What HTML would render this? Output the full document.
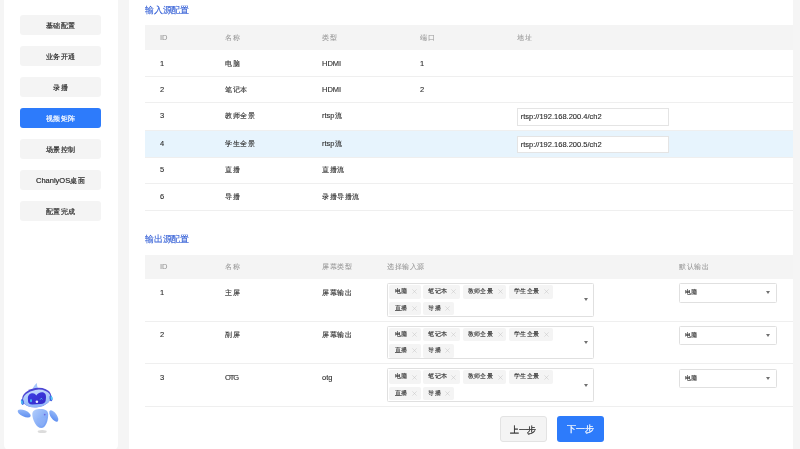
<!DOCTYPE html>
<html><head><meta charset="utf-8">
<style>
*{margin:0;padding:0;box-sizing:border-box}
html,body{width:800px;height:449px;overflow:hidden;background:#f5f5f5;font-family:"Liberation Sans",sans-serif;color:#333}
#wrap{position:absolute;left:0;top:0;width:800px;height:449px;will-change:transform}
.a{position:absolute;white-space:nowrap}
.c{font-size:7.05px;letter-spacing:0.55px}
.side{left:4.3px;top:-10px;width:113.7px;height:460px;background:#fff;border-radius:5px}
.nav{left:20.3px;width:80.7px;height:20px;background:#f4f4f4;border-radius:3px;font-size:7.5px;line-height:21px;text-align:center;color:#2a2a2a;-webkit-text-stroke:0.18px currentColor}
.nav.on{background:#2d7bfb;color:#fff}
.main{left:128.8px;top:-10px;width:664.2px;height:480px;background:#fff}
.ttl{left:145px;font-size:9px;letter-spacing:-0.25px;line-height:10px;color:#2d5ad5;-webkit-text-stroke:0.1px currentColor}
.thd{left:145px;width:648px;background:#f4f4f4}
.th{font-size:7.5px;line-height:10px;color:#969696;-webkit-text-stroke:0.05px currentColor}
.td{font-size:7.5px;line-height:10px;color:#2e2e2e;-webkit-text-stroke:0.12px currentColor}
.ln{left:145px;width:648px;height:1px;background:#efefef}
.inp{left:517px;width:152px;height:17.5px;border:1px solid #e4e4e4;background:#fff;font-size:7.5px;line-height:15.5px;padding-left:2.7px;color:#2a2a2a;-webkit-text-stroke:0.12px currentColor}
.sel{left:387.25px;width:206.3px;height:33.5px;border:1px solid #e0e0e0;border-radius:1.5px;background:#fff}
.tag{height:13.5px;background:#f4f4f4;border-radius:2px;font-size:6.3px;letter-spacing:0.3px;line-height:12.4px;color:#2e2e2e;padding-left:5.3px;-webkit-text-stroke:0.12px currentColor}
.x{position:absolute;right:3.6px;top:4.3px}
.arr{width:0;height:0;border-left:2.7px solid transparent;border-right:2.7px solid transparent;border-top:3.2px solid #707070}
.dsel{left:679.2px;width:97.5px;height:19.7px;border:1px solid #e0e0e0;border-radius:1.5px;background:#fff;font-size:6.3px;letter-spacing:0.3px;line-height:15.5px;padding-left:4.5px;color:#2e2e2e;-webkit-text-stroke:0.12px currentColor}
.btn{top:416px;width:47px;height:25.6px;border-radius:3px;font-size:9px;letter-spacing:-0.3px;line-height:26.6px;text-align:center;-webkit-text-stroke:0.22px currentColor}
</style></head><body>
<div id="wrap">
<div class="a side"></div>
<div class="a nav" style="top:15px"><span class="c">基础配置</span></div>
<div class="a nav" style="top:46px"><span class="c">业务开通</span></div>
<div class="a nav" style="top:77px"><span class="c">录播</span></div>
<div class="a nav on" style="top:108px"><span class="c">视频矩阵</span></div>
<div class="a nav" style="top:139px"><span class="c">场景控制</span></div>
<div class="a nav" style="top:170px">ChanlyOS<span class="c">桌面</span></div>
<div class="a nav" style="top:201px"><span class="c">配置完成</span></div>
<div class="a main"></div>
<div class="a ttl" style="top:5.2px">输入源配置</div>
<div class="a thd" style="top:25px;height:25px"></div>
<div class="a th" style="left:160px;top:32.5px">ID</div>
<div class="a th" style="left:225px;top:32.5px"><span class="c">名称</span></div>
<div class="a th" style="left:322px;top:32.5px"><span class="c">类型</span></div>
<div class="a th" style="left:420px;top:32.5px"><span class="c">端口</span></div>
<div class="a th" style="left:517px;top:32.5px"><span class="c">地址</span></div>
<div class="a" style="left:145px;top:130px;width:648px;height:27.5px;background:#e7f4fd"></div>
<div class="a ln" style="top:76px"></div>
<div class="a ln" style="top:102px"></div>
<div class="a ln" style="top:129.5px"></div>
<div class="a ln" style="top:157px"></div>
<div class="a ln" style="top:183px"></div>
<div class="a ln" style="top:209.5px"></div>
<div class="a td" style="left:160px;top:58.5px">1</div>
<div class="a td" style="left:225px;top:58.5px"><span class="c">电脑</span></div>
<div class="a td" style="left:322px;top:58.5px">HDMI</div>
<div class="a td" style="left:420px;top:58.5px">1</div>
<div class="a td" style="left:160px;top:84.5px">2</div>
<div class="a td" style="left:225px;top:84.5px"><span class="c">笔记本</span></div>
<div class="a td" style="left:322px;top:84.5px">HDMI</div>
<div class="a td" style="left:420px;top:84.5px">2</div>
<div class="a td" style="left:160px;top:111px">3</div>
<div class="a td" style="left:225px;top:111px"><span class="c">教师全景</span></div>
<div class="a td" style="left:322px;top:111px">rtsp<span class="c">流</span></div>
<div class="a inp" style="top:108px">rtsp://192.168.200.4/ch2</div>
<div class="a td" style="left:160px;top:138.5px">4</div>
<div class="a td" style="left:225px;top:138.5px"><span class="c">学生全景</span></div>
<div class="a td" style="left:322px;top:138.5px">rtsp<span class="c">流</span></div>
<div class="a inp" style="top:135.5px">rtsp://192.168.200.5/ch2</div>
<div class="a td" style="left:160px;top:165px">5</div>
<div class="a td" style="left:225px;top:165px"><span class="c">直播</span></div>
<div class="a td" style="left:322px;top:165px"><span class="c">直播流</span></div>
<div class="a td" style="left:160px;top:191.5px">6</div>
<div class="a td" style="left:225px;top:191.5px"><span class="c">导播</span></div>
<div class="a td" style="left:322px;top:191.5px"><span class="c">录播导播流</span></div>
<div class="a ttl" style="top:234.3px">输出源配置</div>
<div class="a thd" style="top:254.5px;height:24px"></div>
<div class="a th" style="left:160px;top:261.5px">ID</div>
<div class="a th" style="left:225px;top:261.5px"><span class="c">名称</span></div>
<div class="a th" style="left:322px;top:261.5px"><span class="c">屏幕类型</span></div>
<div class="a th" style="left:387px;top:261.5px"><span class="c">选择输入源</span></div>
<div class="a th" style="left:679px;top:261.5px"><span class="c">默认输出</span></div>
<div class="a ln" style="top:320.5px"></div>
<div class="a ln" style="top:363.2px"></div>
<div class="a ln" style="top:405.7px"></div>
<div class="a td" style="left:160px;top:287.5px">1</div>
<div class="a td" style="left:225px;top:287.5px"><span class="c">主屏</span></div>
<div class="a td" style="left:322px;top:287.5px"><span class="c">屏幕输出</span></div>
<div class="a sel" style="top:283.25px">
<div class="a tag" style="left:1.15px;top:0.85px;width:31.35px">电脑<svg class="x" width="5" height="5" viewBox="0 0 5 5"><path d="M0.4 0.4L4.6 4.6M4.6 0.4L0.4 4.6" stroke="#c4c4c4" stroke-width="0.5"/></svg></div>
<div class="a tag" style="left:34.85px;top:0.85px;width:36.9px">笔记本<svg class="x" width="5" height="5" viewBox="0 0 5 5"><path d="M0.4 0.4L4.6 4.6M4.6 0.4L0.4 4.6" stroke="#c4c4c4" stroke-width="0.5"/></svg></div>
<div class="a tag" style="left:74.35px;top:0.85px;width:43.8px">教师全景<svg class="x" width="5" height="5" viewBox="0 0 5 5"><path d="M0.4 0.4L4.6 4.6M4.6 0.4L0.4 4.6" stroke="#c4c4c4" stroke-width="0.5"/></svg></div>
<div class="a tag" style="left:120.4px;top:0.85px;width:44.1px">学生全景<svg class="x" width="5" height="5" viewBox="0 0 5 5"><path d="M0.4 0.4L4.6 4.6M4.6 0.4L0.4 4.6" stroke="#c4c4c4" stroke-width="0.5"/></svg></div>
<div class="a tag" style="left:1.15px;top:17.25px;width:31.35px">直播<svg class="x" width="5" height="5" viewBox="0 0 5 5"><path d="M0.4 0.4L4.6 4.6M4.6 0.4L0.4 4.6" stroke="#c4c4c4" stroke-width="0.5"/></svg></div>
<div class="a tag" style="left:34.85px;top:17.25px;width:30.65px">导播<svg class="x" width="5" height="5" viewBox="0 0 5 5"><path d="M0.4 0.4L4.6 4.6M4.6 0.4L0.4 4.6" stroke="#c4c4c4" stroke-width="0.5"/></svg></div>
<div class="a arr" style="left:195.3px;top:14.2px"></div></div>
<div class="a dsel" style="top:283.3px">电脑<div class="a arr" style="left:86.3px;top:7.2px"></div></div>
<div class="a td" style="left:160px;top:330.0px">2</div>
<div class="a td" style="left:225px;top:330.0px"><span class="c">副屏</span></div>
<div class="a td" style="left:322px;top:330.0px"><span class="c">屏幕输出</span></div>
<div class="a sel" style="top:325.75px">
<div class="a tag" style="left:1.15px;top:0.85px;width:31.35px">电脑<svg class="x" width="5" height="5" viewBox="0 0 5 5"><path d="M0.4 0.4L4.6 4.6M4.6 0.4L0.4 4.6" stroke="#c4c4c4" stroke-width="0.5"/></svg></div>
<div class="a tag" style="left:34.85px;top:0.85px;width:36.9px">笔记本<svg class="x" width="5" height="5" viewBox="0 0 5 5"><path d="M0.4 0.4L4.6 4.6M4.6 0.4L0.4 4.6" stroke="#c4c4c4" stroke-width="0.5"/></svg></div>
<div class="a tag" style="left:74.35px;top:0.85px;width:43.8px">教师全景<svg class="x" width="5" height="5" viewBox="0 0 5 5"><path d="M0.4 0.4L4.6 4.6M4.6 0.4L0.4 4.6" stroke="#c4c4c4" stroke-width="0.5"/></svg></div>
<div class="a tag" style="left:120.4px;top:0.85px;width:44.1px">学生全景<svg class="x" width="5" height="5" viewBox="0 0 5 5"><path d="M0.4 0.4L4.6 4.6M4.6 0.4L0.4 4.6" stroke="#c4c4c4" stroke-width="0.5"/></svg></div>
<div class="a tag" style="left:1.15px;top:17.25px;width:31.35px">直播<svg class="x" width="5" height="5" viewBox="0 0 5 5"><path d="M0.4 0.4L4.6 4.6M4.6 0.4L0.4 4.6" stroke="#c4c4c4" stroke-width="0.5"/></svg></div>
<div class="a tag" style="left:34.85px;top:17.25px;width:30.65px">导播<svg class="x" width="5" height="5" viewBox="0 0 5 5"><path d="M0.4 0.4L4.6 4.6M4.6 0.4L0.4 4.6" stroke="#c4c4c4" stroke-width="0.5"/></svg></div>
<div class="a arr" style="left:195.3px;top:14.2px"></div></div>
<div class="a dsel" style="top:325.8px">电脑<div class="a arr" style="left:86.3px;top:7.2px"></div></div>
<div class="a td" style="left:160px;top:372.7px">3</div>
<div class="a td" style="left:225px;top:372.7px"><span style="letter-spacing:-1.1px">OTG</span></div>
<div class="a td" style="left:322px;top:372.7px">otg</div>
<div class="a sel" style="top:368.45px">
<div class="a tag" style="left:1.15px;top:0.85px;width:31.35px">电脑<svg class="x" width="5" height="5" viewBox="0 0 5 5"><path d="M0.4 0.4L4.6 4.6M4.6 0.4L0.4 4.6" stroke="#c4c4c4" stroke-width="0.5"/></svg></div>
<div class="a tag" style="left:34.85px;top:0.85px;width:36.9px">笔记本<svg class="x" width="5" height="5" viewBox="0 0 5 5"><path d="M0.4 0.4L4.6 4.6M4.6 0.4L0.4 4.6" stroke="#c4c4c4" stroke-width="0.5"/></svg></div>
<div class="a tag" style="left:74.35px;top:0.85px;width:43.8px">教师全景<svg class="x" width="5" height="5" viewBox="0 0 5 5"><path d="M0.4 0.4L4.6 4.6M4.6 0.4L0.4 4.6" stroke="#c4c4c4" stroke-width="0.5"/></svg></div>
<div class="a tag" style="left:120.4px;top:0.85px;width:44.1px">学生全景<svg class="x" width="5" height="5" viewBox="0 0 5 5"><path d="M0.4 0.4L4.6 4.6M4.6 0.4L0.4 4.6" stroke="#c4c4c4" stroke-width="0.5"/></svg></div>
<div class="a tag" style="left:1.15px;top:17.25px;width:31.35px">直播<svg class="x" width="5" height="5" viewBox="0 0 5 5"><path d="M0.4 0.4L4.6 4.6M4.6 0.4L0.4 4.6" stroke="#c4c4c4" stroke-width="0.5"/></svg></div>
<div class="a tag" style="left:34.85px;top:17.25px;width:30.65px">导播<svg class="x" width="5" height="5" viewBox="0 0 5 5"><path d="M0.4 0.4L4.6 4.6M4.6 0.4L0.4 4.6" stroke="#c4c4c4" stroke-width="0.5"/></svg></div>
<div class="a arr" style="left:195.3px;top:14.2px"></div></div>
<div class="a dsel" style="top:368.5px">电脑<div class="a arr" style="left:86.3px;top:7.2px"></div></div>
<div class="a btn" style="left:499.6px;background:#f4f4f4;border:1px solid #e3e3e3;color:#222">上一步</div>
<div class="a btn" style="left:557px;background:#2d7bfb;color:#fff">下一步</div>
<svg class="a" style="left:12px;top:378px" width="52" height="60" viewBox="12 378 52 60">
<defs>
<linearGradient id="hb" x1="0" y1="0" x2="0" y2="1"><stop offset="0" stop-color="#c2d8fd"/><stop offset="1" stop-color="#8db3f8"/></linearGradient>
<linearGradient id="vz" x1="0" y1="0" x2="1" y2="1"><stop offset="0" stop-color="#3d3fe4"/><stop offset="1" stop-color="#3328c8"/></linearGradient>
<linearGradient id="bd" x1="0" y1="0" x2="1" y2="1"><stop offset="0" stop-color="#b3cefc"/><stop offset="1" stop-color="#6a98f3"/></linearGradient>
<linearGradient id="am" x1="0" y1="0" x2="1" y2="1"><stop offset="0" stop-color="#9fc0fa"/><stop offset="1" stop-color="#5587ef"/></linearGradient>
</defs>
<ellipse cx="42.2" cy="431.5" rx="4.5" ry="1.5" fill="#dcdcdc"/>
<path d="M32.3 390 C33 387 35 384.5 37 383 C36.6 385 37.5 387.5 38.8 389.8 Z" fill="#a6c6fb"/>
<ellipse cx="36.7" cy="397.6" rx="14.6" ry="9.6" transform="rotate(-9 36.7 397.6)" fill="#4b45d4"/>
<ellipse cx="36.8" cy="398.6" rx="13.9" ry="8.8" transform="rotate(-9 36.8 398.6)" fill="url(#hb)"/>
<path d="M27.9 399 C27.6 395 30 393.3 32.8 393.3 C34.6 393.3 35.6 394.3 36.3 395.6 C37.3 393.6 39.5 392.2 42 392.2 C45 392.2 46.2 394.5 46 397.5 L45.7 400.5 C45.4 403 43.5 403.8 40.8 404 L32.5 404.4 C29.6 404.5 28.1 403.3 28 401 Z" fill="url(#vz)"/>
<ellipse cx="31" cy="400.7" rx="0.75" ry="1.6" fill="#46e0fb"/>
<path d="M40.2 399.6 Q41.3 397.2 42.4 399.3" stroke="#4fd8f8" stroke-width="0.8" fill="none"/>
<ellipse cx="36.9" cy="401.7" rx="1.3" ry="1.2" fill="#e6e4ff"/>
<ellipse cx="22.4" cy="402" rx="1.5" ry="3" transform="rotate(-9 22.4 402)" fill="#3d5fe2"/>
<ellipse cx="21.9" cy="402.2" rx="0.8" ry="2" transform="rotate(-9 21.9 402.2)" fill="#4fd2f6"/>
<ellipse cx="51" cy="398.3" rx="1.5" ry="3" transform="rotate(-9 51 398.3)" fill="#3d5fe2"/>
<ellipse cx="51.5" cy="398.1" rx="0.8" ry="2" transform="rotate(-9 51.5 398.1)" fill="#4fd2f6"/>
<ellipse cx="24.2" cy="413.4" rx="7" ry="3.1" transform="rotate(24 24.2 413.4)" fill="url(#am)"/>
<ellipse cx="53.8" cy="416" rx="6.6" ry="3" transform="rotate(55 53.8 416)" fill="url(#am)"/>
<path d="M32.3 414 C32.3 410 36.5 408.9 40.5 408.9 C45 408.9 48.2 410.2 48.2 414.5 C48.2 421 45.5 428.1 41.2 428.1 C36.5 428.1 32.3 420 32.3 414 Z" fill="url(#bd)"/>
<path d="M37 418.6 L46 417.4 Q45.5 424.5 41.8 426.5 Q38.5 424 37 418.6 Z" fill="#8fb2f7" opacity="0.6"/>
<circle cx="44.7" cy="414.6" r="0.9" fill="#6e68de"/>
</svg>

</div></body></html>
